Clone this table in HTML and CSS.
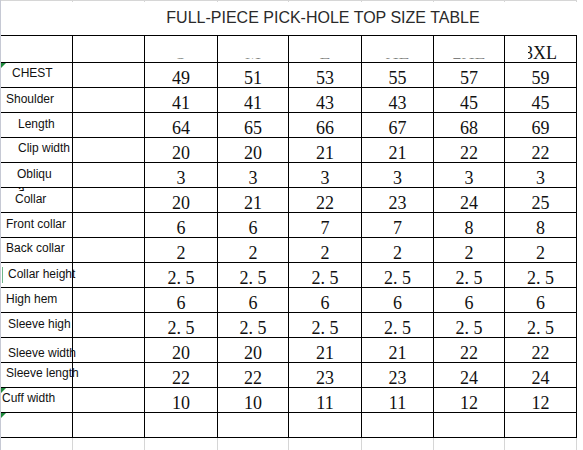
FILE: index.html
```html
<!DOCTYPE html>
<html>
<head>
<meta charset="utf-8">
<link rel="stylesheet" href="styles.css">
</head>
<body>
<div class="page">
  <div class="sheet">
    <div class="title-area">
      <div class="ticks"><div></div><div></div><div></div><div></div><div></div><div></div><div></div><div></div></div>
      <div class="title">FULL-PIECE PICK-HOLE TOP SIZE TABLE</div>
    </div>
    <div class="grid">
      <div></div><div></div>
      <div class="hdr"><span class="cut">S</span></div>
      <div class="hdr"><span class="cut">M</span></div>
      <div class="hdr"><span class="cut">L</span></div>
      <div class="hdr"><span class="cut">XL</span></div>
      <div class="hdr"><span class="cut">2XL</span></div>
      <div class="hdr"><span class="cut3">3XL</span></div>

      <div class="lbl x11 y3 mark">CHEST</div><div></div>
      <div class="num">49</div><div class="num">51</div><div class="num">53</div><div class="num">55</div><div class="num">57</div><div class="num">59</div>

      <div class="lbl x5 y4">Shoulder</div><div></div>
      <div class="num">41</div><div class="num">41</div><div class="num">43</div><div class="num">43</div><div class="num">45</div><div class="num">45</div>

      <div class="lbl x17 y4">Length</div><div></div>
      <div class="num">64</div><div class="num">65</div><div class="num">66</div><div class="num">67</div><div class="num">68</div><div class="num">69</div>

      <div class="lbl x17 y3">Clip width</div><div></div>
      <div class="num">20</div><div class="num">20</div><div class="num">21</div><div class="num">21</div><div class="num">22</div><div class="num">22</div>

      <div class="lbl x16 y4">Obliqu</div><div></div>
      <div class="num">3</div><div class="num">3</div><div class="num">3</div><div class="num">3</div><div class="num">3</div><div class="num">3</div>

      <div class="lbl x14 y4"><span class="stub"><i>a</i></span>Collar</div><div></div>
      <div class="num">20</div><div class="num">21</div><div class="num">22</div><div class="num">23</div><div class="num">24</div><div class="num">25</div>

      <div class="lbl x5 y4">Front collar</div><div></div>
      <div class="num">6</div><div class="num">6</div><div class="num">7</div><div class="num">7</div><div class="num">8</div><div class="num">8</div>

      <div class="lbl x5 y3">Back collar</div><div></div>
      <div class="num">2</div><div class="num">2</div><div class="num">2</div><div class="num">2</div><div class="num">2</div><div class="num">2</div>

      <div class="lbl x7 y4 edge">Collar height</div><div></div>
      <div class="num">2. 5</div><div class="num">2. 5</div><div class="num">2. 5</div><div class="num">2. 5</div><div class="num">2. 5</div><div class="num">2. 5</div>

      <div class="lbl x5 y4">High hem</div><div></div>
      <div class="num">6</div><div class="num">6</div><div class="num">6</div><div class="num">6</div><div class="num">6</div><div class="num">6</div>

      <div class="lbl x7 y4">Sleeve high</div><div></div>
      <div class="num">2. 5</div><div class="num">2. 5</div><div class="num">2. 5</div><div class="num">2. 5</div><div class="num">2. 5</div><div class="num">2. 5</div>

      <div class="lbl x7 y8">Sleeve width</div><div></div>
      <div class="num">20</div><div class="num">20</div><div class="num">21</div><div class="num">21</div><div class="num">22</div><div class="num">22</div>

      <div class="lbl x5 y3">Sleeve length</div><div></div>
      <div class="num">22</div><div class="num">22</div><div class="num">23</div><div class="num">23</div><div class="num">24</div><div class="num">24</div>

      <div class="lbl x1 y3 mark">Cuff width</div><div></div>
      <div class="num">10</div><div class="num">10</div><div class="num">11</div><div class="num">11</div><div class="num">12</div><div class="num">12</div>

      <div class="lbl mark"></div><div></div>
      <div></div><div></div><div></div><div></div><div></div><div></div>
    </div>
    <div class="below"><div></div><div></div><div></div><div></div><div></div><div></div><div></div><div></div></div>
  </div>
  <div class="gutter"></div>
</div>
</body>
</html>
```

FILE: styles.css
```css
html, body {
  margin: 0;
  background: #fff;
}

.page {
  display: flex;
  width: 583px;
  height: 450px;
  overflow: hidden;
}

.sheet {
  flex: none;
  width: 576px;
  border-left: 1px solid #c6c9d4;
}

.gutter {
  flex: 1;
}

.title-area {
  height: 34px;
  border-top: 1px solid #d6d6d6;
}

.ticks,
.grid,
.below {
  display: grid;
  grid-template-columns: 71px 71px 72px 70px 72px 71px 70px 71px;
  column-gap: 1px;
}

.ticks {
  height: 1px;
  background: #d6d6d6;
  padding-right: 1px;
}

.ticks > div,
.below > div {
  background: #fff;
}

.title {
  margin-top: 8px;
  padding-left: 68px;
  text-align: center;
  font: 16px/16px "Liberation Sans", Arial, sans-serif;
  color: #2a2a2a;
  white-space: nowrap;
}

.grid {
  grid-template-rows: 26px repeat(15, 24px);
  row-gap: 1px;
  background: #000;
  padding: 1px 1px 1px 0;
}

.grid > div {
  background: #fff;
  min-width: 0;
}

.num,
.hdr {
  display: flex;
  align-items: flex-end;
  justify-content: center;
  font: 18px/18px "Liberation Serif", "Times New Roman", serif;
  color: #111;
  white-space: pre;
}

.cut {
  clip-path: inset(14.5px 0 0 0);
}

.cut3 {
  clip-path: inset(0 0 0 4px);
}

.lbl {
  position: relative;
  z-index: 1;
  font: 12px/14px "Liberation Sans", Arial, sans-serif;
  color: #111;
  white-space: nowrap;
}

.x1 { padding-left: 1px; }
.x5 { padding-left: 5px; }
.x7 { padding-left: 7px; }
.x11 { padding-left: 11px; }
.x14 { padding-left: 14px; }
.x16 { padding-left: 16px; }
.x17 { padding-left: 17px; }

.y3 { padding-top: 3px; }
.y4 { padding-top: 4px; }
.y8 { padding-top: 8px; }

.mark::before {
  content: "";
  position: absolute;
  left: 0;
  top: 0;
  border-top: 5px solid #1f8a3c;
  border-right: 5px solid transparent;
}

.edge::after {
  content: "";
  position: absolute;
  left: 1px;
  top: 4px;
  width: 1px;
  height: 16px;
  background: #6fb58a;
}

.stub {
  position: absolute;
  left: 17px;
  top: 0;
  height: 3px;
  overflow: hidden;
}

.stub i {
  display: block;
  margin-top: -5px;
  font-style: normal;
}

.below {
  height: 13px;
  background: #d6d6d6;
  padding-right: 1px;
}
```
